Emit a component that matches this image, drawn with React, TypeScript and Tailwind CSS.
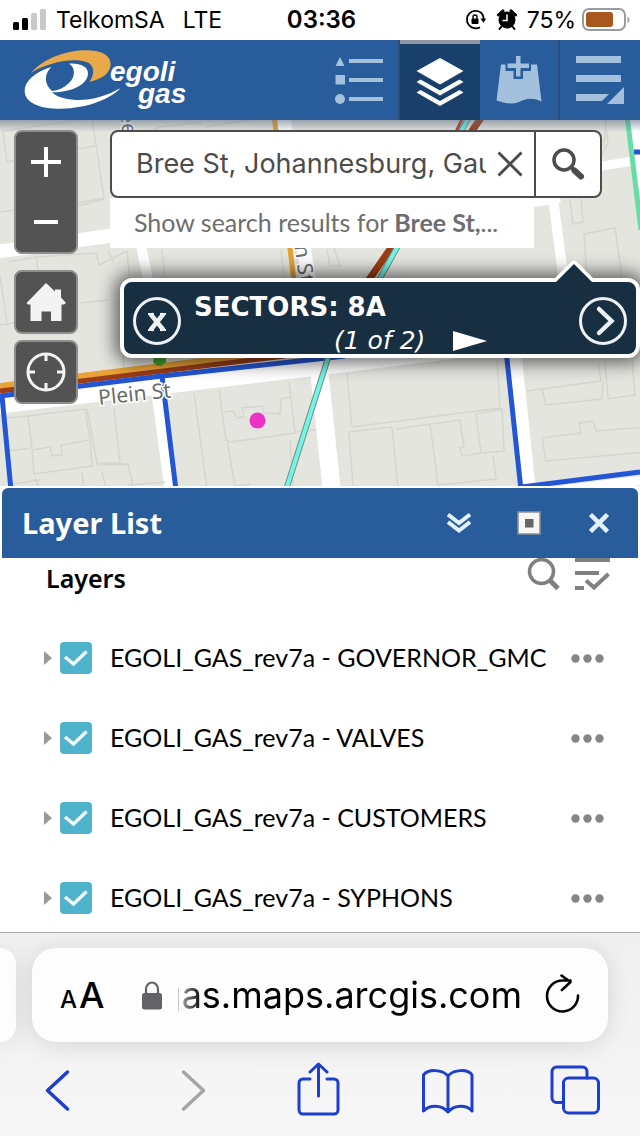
import React, { useState } from 'react';

const layerNames = ['GOVERNOR_GMC', 'VALVES', 'CUSTOMERS', 'SYPHONS'];

const StatusBar: React.FC = () => (
  <div className="grid h-10 shrink-0 grid-cols-[1fr_auto_1fr] items-center bg-white pl-[13px] pr-2.5 font-[Inter,sans-serif] text-[23px] text-black">
    <div className="flex items-center">
      <svg width="33" height="22" viewBox="0 0 33 22" className="mr-2.5">
        <rect x="0" y="13" width="6" height="8" rx="1.5" fill="#000" />
        <rect x="9" y="9" width="6" height="12" rx="1.5" fill="#000" />
        <rect x="18" y="4" width="6" height="17" rx="1.5" fill="#c9c9c9" />
        <rect x="27" y="0" width="6" height="21" rx="1.5" fill="#c9c9c9" />
      </svg>
      <span className="mr-[18px]">TelkomSA</span>
      <span>LTE</span>
    </div>
    <span className="text-2xl font-semibold">03:36</span>
    <div className="flex items-center justify-end">
      <svg width="22" height="22" viewBox="0 0 22 22" className="mr-2.5" fill="none" stroke="#000" strokeWidth="1.8">
        <path d="M15.5 3.2A8.8 8.8 0 1 0 15 18.3M15.5 3.2A8.8 8.8 0 0 1 18.6 10.5" />
        <path d="M15.5 9.5h5.8l-2.9 4.3z" fill="#000" stroke="none" />
        <rect x="6.5" y="9.5" width="7" height="5.5" rx="1" fill="#000" stroke="none" />
        <path d="M8 10V8a2 2 0 0 1 4 0v2" strokeWidth="1.4" />
      </svg>
      <svg width="20" height="22" viewBox="0 0 20 22" className="mr-2.5">
        <circle cx="10" cy="11" r="8.5" fill="#000" />
        <path d="M1.5 6 6 1.8M18.5 6 14 1.8" stroke="#000" strokeWidth="3" strokeLinecap="round" />
        <path d="M4.5 17.5 2.5 20M15.5 17.5l2 2.5" stroke="#000" strokeWidth="2" strokeLinecap="round" />
        <path d="M10 5.5V11.5H5.5" stroke="#fff" strokeWidth="1.5" fill="none" />
      </svg>
      <span className="mr-1.5">75%</span>
      <svg width="48" height="24" viewBox="0 0 48 24">
        <rect x="1" y="1" width="42" height="21" rx="6" fill="none" stroke="#9b9b9b" strokeWidth="2" />
        <rect x="4" y="4" width="27" height="15" rx="3" fill="#a9571f" />
        <path d="M45.5 8.5v6.500c2.5-.8 2.5-5.700 0-6.500z" fill="#9b9b9b" />
      </svg>
    </div>
  </div>
);

const Logo: React.FC = () => (
  <div className="flex items-start pl-6 pt-[9px]">
    <svg width="98" height="61" viewBox="70 145 294 183" className="shrink-0">
      <path
        d="M92 216C130 172 200 148 262 149C308 150 332 168 330 194C326 222 302 235 266 244C278 228 284 205 268 190C240 168 150 180 92 216Z"
        fill="#e9a84a"
      />
      <path
        d="M152 199C102 214 72 242 72 270C72 308 120 324 180 324C260 323 330 295 360 262C320 285 270 300 225 298C190 296 168 288 154 275C205 276 262 255 262 218C262 199 240 187 205 189C224 200 226 226 205 247C190 262 172 270 154 271C130 250 130 220 152 199Z"
        fill="#fff"
      />
    </svg>
    <div className="-ml-3 mt-3 font-['Liberation_Sans',Arial,sans-serif] text-[28px] font-bold italic leading-[22px] text-white">
      <div>egoli</div>
      <div className="pl-7">gas</div>
    </div>
  </div>
);

const Header: React.FC = () => (
  <header className="flex h-20 shrink-0 justify-between bg-[#285c9b]">
    <Logo />
    <nav className="flex">
      <button aria-label="Legend" className="flex w-20 items-center justify-center border-r-2 border-[#2b4f7f]">
        <svg width="50" height="50" viewBox="0 0 50 50" fill="#a3c0dd">
          <path d="M6 2 10.5 11h-9z" />
          <rect x="1.5" y="20" width="9.5" height="9.5" />
          <circle cx="6" cy="44" r="5" />
          <rect x="15" y="4" width="34" height="4" />
          <rect x="15" y="23" width="34" height="4" />
          <rect x="15" y="42" width="34" height="4" />
        </svg>
      </button>
      <button aria-label="Layer list" className="flex w-20 items-center justify-center border-t-4 border-[#8d95a6] bg-[#18406b]">
        <svg width="48" height="50" viewBox="0 0 48 50" fill="#fff">
          <path d="M24 1 47.5 14 24 27.5.5 14z" />
          <path d="M.5 25 4.5 22.5 24 33.5 43.5 22.5 47.5 25 24 38.5z" />
          <path d="M.5 35.5 4.5 33 24 44 43.5 33 47.5 35.5 24 49z" />
        </svg>
      </button>
      <button aria-label="Add data" className="flex w-20 items-center justify-center border-r-2 border-[#2b4f7f]">
        <svg width="46" height="50" viewBox="0 0 46 50" fill="#a3c0dd">
          <path d="M5 9.5h4.5v6.500h8v8h9.5v-8h8v-6.500H41L45.5 46.500C36 42 29 44 23 47 15 50 8 48 .5 45.500z" />
          <path d="M20 1h4.5v7.500H33v4.500h-8.500v8.500H20v-8.500h-8.500v-4.500H20z" />
        </svg>
      </button>
      <button aria-label="More tools" className="flex w-20 items-center justify-center">
        <svg width="50" height="50" viewBox="0 0 50 50" fill="#a3c0dd">
          <rect x="1" y="1" width="45" height="7" />
          <rect x="1" y="20" width="45" height="7" />
          <path d="M1 39h33l-7 7H1z" />
          <path d="M49 32v17H32z" />
        </svg>
      </button>
    </nav>
  </header>
);

const StreetMap: React.FC = () => (
  <svg
    className="absolute inset-0 h-full w-full"
    viewBox="0 120 640 368"
    preserveAspectRatio="xMidYMin slice"
    fill="none"
  >
    <defs>
      <linearGradient id="topShade" x1="0" y1="0" x2="0" y2="1">
        <stop offset="0" stopColor="#5b6a80" stopOpacity="0.55" />
        <stop offset="1" stopColor="#5b6a80" stopOpacity="0" />
      </linearGradient>
    </defs>
    <rect y="120" width="640" height="368" fill="#e4e5df" />

    {/* streets */}
    <g stroke="#fff">
      <path d="M-5 252 330 205" strokeWidth="14" />
      <path d="M-5 406 330 366 540 340" strokeWidth="16" />
      <path d="M138 230 150 290" strokeWidth="10" />
      <path d="M283 115 312 300" strokeWidth="14" />
      <path d="M154 375 170 492" strokeWidth="10" />
      <path d="M318 360 332 492" strokeWidth="18" />
      <path d="M513 340 529 492" strokeWidth="14" />
      <path d="M520 205 560 198M590 168 640 160" strokeWidth="9" />
      <path d="M552 190 565 290" strokeWidth="10" />
      <path d="M634 115 652 240" strokeWidth="12" />
      <path d="M525 494 645 480" strokeWidth="9" />
    </g>

    {/* building outlines */}
    <g stroke="#d5d6d0" strokeWidth="1.5">
      <path d="M3 131 92 118 104 198 78 203M3 131 7 162 17 160M76 149 96 146M78 206 104 199M0 212 14 210" />
      <path d="M141 135 160 127 202 122M205 127 260 118M8 262 36 257 38 270M36 257 96 253 99 265 127 251 132 300M80 303 108 300M0 325 14 323M0 275 7 322M108 250 113 262" />
      <path d="M120 300 124 372M162 250 165 280M281 250 284 278M327 250 330 266 340 266 334 248" />
      <path d="M570 200 573 224 583 222 581 198M584 234 615 228 622 278M584 234 587 278M605 120 608 143 602 155M606 120 604 146" />
      <path d="M5 418 28 416 32 448M28 416 85 409 90 440 61 445 62 455 52 456 50 447 32 450 34 474 92 466 90 440M87 409 97 463 120 463 114 408M97 465 128 464 133 486M8 451 31 448M13 484 40 480M35 478 39 488M82 472 84 488M102 472 106 488M128 485 165 482" />
      <path d="M194 393 207 488M219 390 226 440 230 442 295 433 289 382" />
      <path d="M224 412 233 411 237 418 244 417 242 408 262 406 264 413 280 414 281 399 290 397M227 440 235 486 250 484M290 440 293 486M295 432 316 430" />
      <path d="M347 374 352 427 500 408 497 360M349 432 353 488M349 432 392 427 398 488M396 429 430 424 438 485M433 424 460 420 464 447 460 448 462 456 481 453 476 414 502 409 504 451 481 453M438 485 496 479 493 455" />
      <path d="M526 391 542 389 601 381 598 362M542 389 546 405 602 399 603 382M605 362 608 399 635 395 632 360" />
      <path d="M542 438 546 461 645 452M542 438 581 433 579 423 593 421 596 431 645 427" />
    </g>

    {/* gas network */}
    <path d="M274 115 295 290" stroke="#e4a235" strokeWidth="5" />
    <path d="M0 386 250 355" stroke="#eaa238" strokeWidth="6" />
    <path d="M0 391 285 356" stroke="#9c3d16" strokeWidth="5" />
    <path d="M0 396 162 376 345 356" stroke="#2355d5" strokeWidth="5" />
    <path d="M2 396 11 490M162 376 176 490M506 350 521 490M522 487 640 472M634 152h8" stroke="#2355d5" strokeWidth="5" />
    <path d="M483 115 366 284" stroke="#9c3d16" strokeWidth="7" />
    <path d="M464 115 455 134" stroke="#b84122" strokeWidth="3" />
    <path d="M470 115 378 282M328 358 286 490" stroke="#73927a" strokeWidth="6" />
    <path d="M470 115 378 282M328 358 286 490" stroke="#6ff5ed" strokeWidth="4" />
    <path d="M627 115 641 230" stroke="#67dca6" strokeWidth="5" />
    <path d="M154 357h12v5l-4 4h-5l-4-4z" fill="#46a92c" />
    <circle cx="257.5" cy="420.5" r="8" fill="#ea32c3" />

    <g
      fontFamily="'Noto Sans', sans-serif"
      fontSize="21"
      fill="#6b6b6b"
      stroke="#fff"
      strokeWidth="3"
      paintOrder="stroke"
    >
      <text transform="translate(99 405) rotate(-6)">Plein St</text>
      <text transform="translate(292 229) rotate(82)">ain St</text>
      <text transform="translate(120 112) rotate(84)">ee</text>
    </g>
    <rect y="120" width="640" height="12" fill="url(#topShade)" />
  </svg>
);

const MapControls: React.FC = () => (
  <div className="flex w-16 shrink-0 flex-col">
    <div className="flex flex-col rounded-lg border-2 border-[#8e8e8d] bg-[#535353]">
      <button aria-label="Zoom in" className="flex h-[60px] items-center justify-center">
        <svg width="30" height="30" viewBox="0 0 30 30" stroke="#fff" strokeWidth="4">
          <path d="M15 0v30M0 15h30" />
        </svg>
      </button>
      <button aria-label="Zoom out" className="flex h-[60px] items-center justify-center">
        <svg width="24" height="4" viewBox="0 0 24 4">
          <rect width="24" height="4" fill="#fff" />
        </svg>
      </button>
    </div>
    <button
      aria-label="Default extent"
      className="mt-4 flex h-16 items-center justify-center rounded-lg border-2 border-[#8e8e8d] bg-[#535353]"
    >
      <svg width="40" height="40" viewBox="0 0 40 40" fill="#f3f3f3">
        <path d="M20 1 29 9.5V7.5h6v8L40 21l-2 1.5h-2.5V39H25V29.5h-9.500V39H4.500V22.500H2L.5 21z" />
      </svg>
    </button>
    <button
      aria-label="My location"
      className="mt-1.5 flex h-16 items-center justify-center rounded-lg border-2 border-[#8e8e8d] bg-[#535353]"
    >
      <svg width="40" height="40" viewBox="0 0 40 40" fill="none" stroke="#f3f3f3" strokeWidth="3">
        <circle cx="20" cy="20" r="18" />
        <path d="M20 2v7M20 31v7M2 20h7M31 20h7" />
      </svg>
    </button>
  </div>
);

const SearchBox: React.FC = () => {
  const [query, setQuery] = useState('Bree St, Johannesburg, Gauteng');

  return (
    <div className="ml-8 mr-6 min-w-0 flex-1">
      <div className="flex h-[68px] rounded-lg border-2 border-[#4c4c4c] bg-white">
        <input
          aria-label="Search address"
          value={query}
          onChange={(e) => setQuery(e.target.value)}
          className="ml-6 min-w-0 flex-1 bg-transparent font-[Inter,sans-serif] text-[27px] text-[#4c4c4c] outline-none"
        />
        <button aria-label="Clear search" onClick={() => setQuery('')} className="flex w-12 items-center justify-center">
          <svg width="26" height="26" viewBox="0 0 26 26" stroke="#4c4c4c" strokeWidth="3">
            <path d="M1.5 1.5 24.5 24.5M24.5 1.5 1.5 24.5" />
          </svg>
        </button>
        <button aria-label="Search" className="flex w-[66px] items-center justify-center border-l-2 border-[#4c4c4c]">
          <svg width="34" height="34" viewBox="0 0 34 34" fill="none" stroke="#4c4c4c">
            <circle cx="13" cy="13" r="10" strokeWidth="3.5" />
            <path d="M20 20l5 5" strokeWidth="3.5" />
            <path d="M23.5 23.5l6.500 6" strokeWidth="6" strokeLinecap="round" />
          </svg>
        </button>
      </div>
      <button className="block h-[50px] w-[calc(100%-68px)] truncate bg-white pl-6 pr-5 text-left font-[Lato,sans-serif] text-[25px] text-[#6e6e6e]">
        Show search results for <b>Bree St,</b>...
      </button>
    </div>
  );
};

const SectorPopup: React.FC = () => (
  <div className="absolute left-[120px] right-0 top-[158px] rounded-xl border-4 border-white bg-[#182e41] shadow-[0_0_18px_5px_rgba(0,0,0,0.6)]">
    <svg width="46" height="24" viewBox="0 0 46 24" className="absolute -top-6 right-[39px]">
      <path d="M0 24 20 4q3-3 6 0L46 24z" fill="#fff" />
      <path d="M5 24 23 6 41 24z" fill="#182e41" />
    </svg>
    <div className="flex h-[72px] items-center px-2 pt-1.5 font-['DejaVu_Sans',Verdana,sans-serif] text-white">
      <button aria-label="Close popup">
        <svg width="50" height="50" viewBox="0 0 50 50" fill="none" stroke="#eef2f5">
          <circle cx="25" cy="25" r="22.5" strokeWidth="3" />
          <path d="M18.5 18 31.5 34M31.5 18 18.5 34" strokeWidth="4.500" />
          <path d="M16 18h6M28 18h6M16 34h6M28 34h6" strokeWidth="2" />
        </svg>
      </button>
      <div className="ml-3 flex-1 self-start pt-0.5">
        <h2 className="text-[26px] font-bold leading-[34px]">SECTORS: 8A</h2>
        <div className="flex items-center gap-7 pl-[140px] text-[25px] italic leading-[34px]">
          (1 of 2)
          <button aria-label="Next feature">
            <svg width="34" height="20" viewBox="0 0 34 20">
              <path d="M0 0 34 10 0 20z" fill="#fff" />
            </svg>
          </button>
        </div>
      </div>
      <button aria-label="Show details">
        <svg width="50" height="50" viewBox="0 0 50 50" fill="none" stroke="#eef2f5">
          <circle cx="25" cy="25" r="22.5" strokeWidth="3" />
          <path d="M21 13 33.5 25 21 37" strokeWidth="4.5" strokeLinecap="round" />
        </svg>
      </button>
    </div>
  </div>
);

const LayerRow: React.FC<{ name: string }> = ({ name }) => {
  const [visible, setVisible] = useState(true);

  return (
    <li className="flex h-20 items-center pl-11 pr-9">
      <button aria-label={`Expand ${name}`} className="mr-2">
        <svg width="8" height="14" viewBox="0 0 8 14">
          <path d="M0 0 8 7 0 14z" fill="#999" />
        </svg>
      </button>
      <label className="flex flex-1 items-center">
        <span className="relative mr-[18px] h-8 w-8">
          <input
            type="checkbox"
            checked={visible}
            onChange={() => setVisible(!visible)}
            className="block h-8 w-8 appearance-none rounded border-2 border-[#50b3cc] bg-white checked:bg-[#50b3cc]"
          />
          {visible && (
            <svg width="32" height="32" viewBox="0 0 32 32" fill="none" className="pointer-events-none absolute inset-0">
              <path d="M5 15 13.5 22 26.5 9.5" stroke="#f2fbfd" strokeWidth="3.5" />
            </svg>
          )}
        </span>
        <span>EGOLI_GAS_rev7a - {name}</span>
      </label>
      <button aria-label={`${name} options`}>
        <svg width="33" height="9" viewBox="0 0 33 9" fill="#858585">
          <circle cx="4.5" cy="4.5" r="4.2" />
          <circle cx="16.5" cy="4.5" r="4.2" />
          <circle cx="28.5" cy="4.5" r="4.2" />
        </svg>
      </button>
    </li>
  );
};

const LayerPanel: React.FC = () => (
  <section className="min-h-0 flex-1 overflow-hidden bg-white font-[Lato,sans-serif] text-[25px] text-black">
    <div className="mx-0.5 flex h-[70px] items-center rounded-t-md bg-[#285c9b] pl-5 pr-[29px] text-white">
      <h2 className="flex-1 font-['Noto_Sans',sans-serif] text-[29px] font-bold leading-10">Layer List</h2>
      <button aria-label="Minimise panel">
        <svg width="24" height="20" viewBox="0 0 24 20" fill="none" stroke="#e2f0ff" strokeWidth="4">
          <path d="M1 1.5 12 10 23 1.5M1 9 12 17.5 23 9" />
        </svg>
      </button>
      <button aria-label="Maximise panel" className="ml-[46px]">
        <svg width="24" height="24" viewBox="0 0 24 24">
          <rect x="1" y="1" width="22" height="22" fill="#f6f6f6" stroke="#8a8f96" strokeWidth="1.5" />
          <rect x="8" y="8" width="8.5" height="8.5" fill="#666" />
        </svg>
      </button>
      <button aria-label="Close panel" className="ml-12">
        <svg width="20" height="20" viewBox="0 0 20 20" stroke="#e2f0ff" strokeWidth="4.5">
          <path d="M1.5 1.5 18.5 18.5M18.5 1.5 1.5 18.5" />
        </svg>
      </button>
    </div>
    <div className="flex h-[60px] items-start pl-[46px] pr-[30px]">
      <h3 className="flex-1 font-['Noto_Sans',sans-serif] text-[25px] font-semibold leading-10">Layers</h3>
      <button aria-label="Search layers" className="mr-[15px]">
        <svg width="33" height="33" viewBox="0 0 33 33" fill="none" stroke="#808080">
          <circle cx="14.5" cy="13.5" r="12" strokeWidth="3.5" />
          <path d="M23 22.5l8 8" strokeWidth="5" />
        </svg>
      </button>
      <button aria-label="Layer actions">
        <svg width="35" height="33" viewBox="0 0 35 33" fill="none" stroke="#808080" strokeWidth="4">
          <path d="M0 2h35M0 15h24M0 30h9M11 22.5l8 7L33.5 16" />
        </svg>
      </button>
    </div>
    <ul>
      {layerNames.map((name) => (
        <LayerRow key={name} name={name} />
      ))}
    </ul>
  </section>
);

const BrowserBar: React.FC = () => (
  <footer className="shrink-0 overflow-hidden border-t border-[#acacae] bg-linear-to-b from-[#efefef] to-[#f7f7f7]">
    <div className="mt-[15px] flex h-[94px] gap-4">
      <div className="w-4 rounded-r-2xl bg-[#fdfdfd] shadow-[0_4px_24px_rgba(0,0,0,0.12)]" />
      <div className="mr-8 flex min-w-0 flex-1 items-center rounded-3xl bg-[#fdfdfd] px-7 font-[Inter,sans-serif] text-black shadow-[0_4px_24px_rgba(0,0,0,0.12)]">
        <button aria-label="Page settings" className="flex items-baseline gap-0.5 font-medium">
          <span className="text-2xl">A</span>
          <span className="text-4xl">A</span>
        </button>
        <svg width="20" height="29" viewBox="0 0 20 29" className="ml-auto shrink-0">
          <rect x="0" y="12" width="20" height="16.5" rx="2.5" fill="#636267" />
          <path d="M4 13V8a6 6.500 0 0 1 12 0v5" fill="none" stroke="#636267" strokeWidth="2.2" />
        </svg>
        <div className="ml-4 flex w-[344px] justify-end overflow-hidden text-4xl leading-[48px] [mask-image:linear-gradient(to_right,rgba(0,0,0,0.25),black_24px)]">
          gas.maps.arcgis.com
        </div>
        <button aria-label="Reload" className="ml-[22px]">
          <svg
            width="36"
            height="42"
            viewBox="0 0 36 42"
            fill="none"
            stroke="#000"
            strokeWidth="2.6"
            strokeLinecap="round"
            strokeLinejoin="round"
          >
            <path d="M34 21.5A15.500 15.500 0 1 1 18.500 6.500h8M17.500 1.500 26.500 8 18 16" />
          </svg>
        </button>
      </div>
    </div>
    <nav className="mb-5 mt-5 flex justify-between pl-[31px] pr-[37px] text-[#1c3fd0]">
      <button aria-label="Back">
        <svg width="54" height="54" viewBox="0 0 54 54" fill="none" stroke="currentColor" strokeWidth="3.5" strokeLinecap="round" strokeLinejoin="round">
          <path d="M36.5 10 16.5 28.5 36.5 47" />
        </svg>
      </button>
      <button aria-label="Forward" className="text-[#a5a5a5]">
        <svg width="54" height="54" viewBox="0 0 54 54" fill="none" stroke="currentColor" strokeWidth="3.5" strokeLinecap="round" strokeLinejoin="round">
          <path d="M22.5 10 42.5 28.5 22.5 47" />
        </svg>
      </button>
      <button aria-label="Share">
        <svg width="54" height="54" viewBox="-5 0 54 54" fill="none" stroke="currentColor" strokeWidth="3" strokeLinecap="round" strokeLinejoin="round">
          <path d="M15 17H8a4 4 0 0 0-4 4v27a4 4 0 0 0 4 4h31a4 4 0 0 0 4-4V21a4 4 0 0 0-4-4h-7M23.5 34V2M15 10l8.500-8 8.500 8" />
        </svg>
      </button>
      <button aria-label="Bookmarks">
        <svg width="54" height="54" viewBox="0 0 54 54" fill="none" stroke="currentColor" strokeWidth="3" strokeLinecap="round" strokeLinejoin="round">
          <path d="M28 14C22 7 8 7 3.500 13V49C9 43 21 42 28 50C35 42 47 43 52 49V13C48 7 34 7 28 14ZM28 14V49" />
        </svg>
      </button>
      <button aria-label="Tabs">
        <svg width="54" height="54" viewBox="0 0 54 54" fill="none" stroke="currentColor" strokeWidth="3" strokeLinecap="round" strokeLinejoin="round">
          <rect x="14.5" y="16" width="35" height="35" rx="5" />
          <path d="M38 16V9.500a4.500 4.500 0 0 0-4.500-4.500H7.500A4.500 4.500 0 0 0 3 9.500V36a4.500 4.500 0 0 0 4.500 4.500h6" />
        </svg>
      </button>
    </nav>
  </footer>
);

const App: React.FC = () => {
  return (
    <div className="flex h-screen flex-col overflow-hidden bg-white">
      <StatusBar />
      <Header />
      <main className="relative flex shrink-0 items-start overflow-hidden border-b-2 border-white px-3.5 pb-[82px] pt-2.5">
        <StreetMap />
        <div className="relative flex w-full items-start">
          <MapControls />
          <SearchBox />
        </div>
        <SectorPopup />
      </main>
      <LayerPanel />
      <BrowserBar />
    </div>
  );
};

export default App;
